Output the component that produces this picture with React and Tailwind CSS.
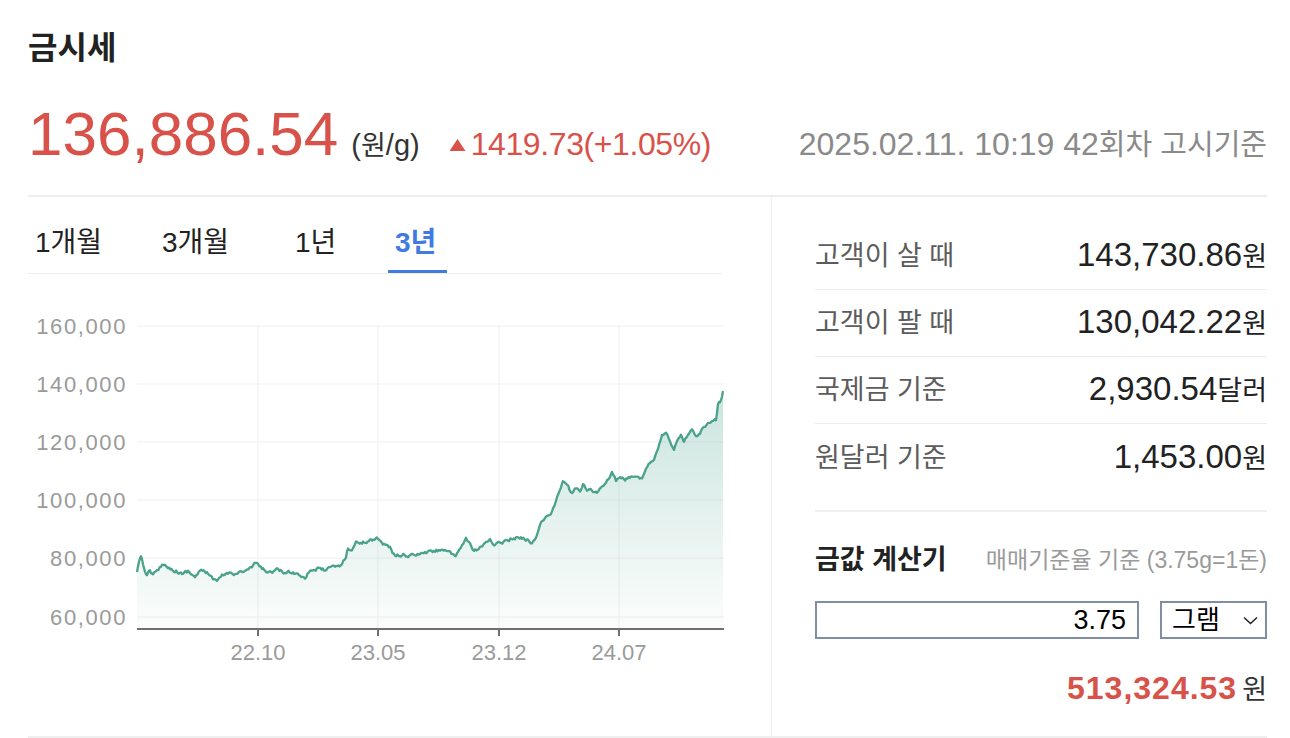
import React from "react";

const KP = [
  [137,572],[139,560],[141,558],[144,568],[147,575],[150,570],[153,575],[157,572],[161,566],[164,563],[168,568],[175,570],[182,574],[188,571],[195,577],[200,571],[207,572],[213,580],[217,582],[222,576],[228,573],[235,573],[240,572],[246,571],[252,567],[257,563],[262,569],[270,572],[277,570],[285,573],[292,572],[300,575],[305,577],[310,570],[318,569],[325,570],[335,567],[342,565],[346,556],[348,548],[352,550],[356,542],[362,543],[370,540],[378,538],[383,543],[390,548],[395,556],[400,555],[408,556],[415,555],[425,553],[435,551],[445,549],[450,553],[455,558],[458,553],[462,545],[466,538],[470,544],[474,552],[480,548],[486,544],[490,538],[494,546],[500,543],[508,539],[515,538],[522,538],[527,540],[532,543],[536,537],[540,523],[546,518],[552,511],[556,502],[560,490],[563,481],[567,485],[572,494],[576,488],[580,490],[583,484],[587,491],[592,490],[597,493],[601,488],[606,484],[612,473],[616,480],[620,478],[625,480],[630,477],[636,478],[642,477],[646,468],[650,462],[654,458],[658,447],[662,436],[666,432],[670,440],[674,450],[677,442],[681,437],[684,441],[688,436],[692,430],[696,438],[700,433],[704,428],[708,425],[712,423],[716,420],[718,405],[721,400],[723,391]
];

function buildPoints() {
  let seed = 12345;
  const rand = () => {
    seed = (seed * 16807) % 2147483647;
    return seed / 2147483647;
  };
  const pts = [];
  let n = 0;
  for (let i = 0; i < KP.length - 1; i++) {
    const [x0, y0] = KP[i];
    const [x1, y1] = KP[i + 1];
    const steps = Math.max(1, Math.round((x1 - x0) / 1.2));
    for (let s = 0; s < steps; s++) {
      const t = s / steps;
      n = n * 0.5 + (rand() - 0.5) * 3;
      const edge = i === 0 && s === 0 ? 0 : n;
      pts.push([x0 + (x1 - x0) * t, y0 + (y1 - y0) * t + edge]);
    }
  }
  pts.push(KP[KP.length - 1]);
  return pts;
}

const PTS = buildPoints();
const LINE = PTS.map((p, i) => `${i ? "L" : "M"}${p[0].toFixed(1)} ${p[1].toFixed(1)}`).join(" ");
const AREA = `${LINE} L723 629 L137 629 Z`;

const GRID_Y = [
  [326, "160,000"],
  [384, "140,000"],
  [442, "120,000"],
  [500, "100,000"],
  [558, "80,000"],
  [617, "60,000"],
];
const GRID_X = [
  [258, "22.10"],
  [378, "23.05"],
  [499, "23.12"],
  [619, "24.07"],
];

function Chart() {
  return (
    <svg width="696" height="463" viewBox="0 0 696 463" className="block">
      <defs>
        <linearGradient id="goldFill" x1="0" y1="390" x2="0" y2="629" gradientUnits="userSpaceOnUse">
          <stop offset="0" stopColor="#4fa68f" stopOpacity="0.3" />
          <stop offset="1" stopColor="#4fa68f" stopOpacity="0.02" />
        </linearGradient>
      </defs>
      <g transform="translate(-28,-274)">
        {GRID_Y.map(([y, label]) => (
          <g key={label}>
            <line x1="137" y1={y} x2="724" y2={y} stroke="#efefef" strokeWidth="1" />
            <text
              x="127"
              y={y + 8}
              textAnchor="end"
              fontFamily="Liberation Sans, Arial, sans-serif"
              fontSize="22"
              letterSpacing="1.6"
              fill="#9a9a9a"
            >
              {label}
            </text>
          </g>
        ))}
        {GRID_X.map(([x, label]) => (
          <g key={label}>
            <line x1={x} y1="326" x2={x} y2="629" stroke="#efefef" strokeWidth="1" />
            <line x1={x} y1="629" x2={x} y2="636" stroke="#707070" strokeWidth="2" />
            <text
              x={x}
              y="660"
              textAnchor="middle"
              fontFamily="Liberation Sans, Arial, sans-serif"
              fontSize="22"
              fill="#9a9a9a"
            >
              {label}
            </text>
          </g>
        ))}
        <path d={AREA} fill="url(#goldFill)" stroke="none" />
        <path d={LINE} fill="none" stroke="#4aa28b" strokeWidth="2.3" strokeLinejoin="round" />
        <line x1="137" y1="629" x2="724" y2="629" stroke="#707070" strokeWidth="2" />
      </g>
    </svg>
  );
}

function Row({ label, num, unit, last }) {
  return (
    <div
      className={`flex h-[67px] items-center justify-between ${last ? "" : "border-b border-[#ececec]"}`}
    >
      <span className="text-[27px] leading-[36px] text-[#5c5c5c]">{label}</span>
      <span className="flex items-baseline leading-[36px] text-[#222]">
        <span className="text-[33px]">{num}</span>
        <span className="text-[27px]">{unit}</span>
      </span>
    </div>
  );
}

export default function App() {
  return (
    <div className="w-[1290px] h-[738px] overflow-hidden bg-white pl-[28px] pr-[23px] font-['Liberation_Sans','Noto_Sans_CJK_KR',sans-serif]">
      <div className="pt-[28px] text-[32px] font-bold leading-[40px] text-[#222]">금시세</div>

      <div className="mt-[35px] flex h-[62px] items-baseline">
        <span className="text-[62px] leading-[62px] text-[#d8524a]">136,886.54</span>
        <span className="ml-[13px] text-[29px] text-[#333]">
          (<span className="text-[27px]">원</span>/g)
        </span>
        <span className="ml-[29px] flex items-baseline text-[#d8524a]">
          <svg width="17" height="14" viewBox="0 0 17 14" className="mr-[5px] self-center translate-y-[1px]">
            <polygon points="8.5,1 16.5,13 0.5,13" fill="#d8524a" />
          </svg>
          <span className="text-[32px] tracking-[-0.4px]">1419.73(+1.05%)</span>
        </span>
        <span className="ml-auto text-[32px] text-[#8a8a8a]">
          2025.02.11. 10:19 42<span className="text-[29px]">회차 고시기준</span>
        </span>
      </div>

      <div className="mt-[30px] h-[2px] bg-[#ededed]" />

      <div className="flex h-[541px] border-b-2 border-[#efefef]">
        <div className="w-[744px] shrink-0 border-r border-[#efefef] pr-[48px]">
          <div className="flex h-[77px] border-b border-[#eeeeee] text-[28px] leading-[32px]">
            <div className="w-[127px] pl-[7px] pt-[30px] text-[#222]">1개월</div>
            <div className="w-[133px] pl-[7px] pt-[30px] text-[#222]">3개월</div>
            <div className="w-[100px] pl-[7px] pt-[30px] text-[#222]">1년</div>
            <div className="flex h-[76px] flex-col justify-between">
              <div className="pl-[7px] pr-[11px] pt-[30px] font-bold text-[#3f7be0]">3년</div>
              <div className="h-[3px] bg-[#3f7be0]" />
            </div>
          </div>
          <Chart />
        </div>

        <div className="flex-1 pl-[43px]">
          <div className="pt-[26px]">
            <Row label="고객이 살 때" num="143,730.86" unit="원" />
            <Row label="고객이 팔 때" num="130,042.22" unit="원" />
            <Row label="국제금 기준" num="2,930.54" unit="달러" />
            <Row label="원달러 기준" num="1,453.00" unit="원" last />
          </div>
          <div className="mt-[19px] h-[2px] bg-[#efefef]" />

          <div className="mt-[30px] flex items-center justify-between leading-[36px]">
            <span className="text-[27px] font-bold text-[#222]">금값 계산기</span>
            <span className="text-[23px] text-[#9a9a9a]">매매기준율 기준 (3.75g=1돈)</span>
          </div>

          <div className="mt-[23px] flex justify-between">
            <div className="flex h-[38px] w-[324px] items-center justify-end border-2 border-[#7f8ea3] pr-[11px] text-[27px] text-black">
              3.75
            </div>
            <div className="flex h-[38px] w-[107px] items-center justify-between border-2 border-[#7f8ea3] pl-[10px] pr-[7px] text-[26px] text-black">
              <span>그램</span>
              <svg width="15" height="9" viewBox="0 0 15 9">
                <polyline points="1,1.5 7.5,7.5 14,1.5" fill="none" stroke="#222" strokeWidth="1.5" />
              </svg>
            </div>
          </div>

          <div className="mt-[31px] flex items-baseline justify-end leading-[36px]">
            <span className="text-[32px] font-bold tracking-[1px] text-[#d8524a]">513,324.53</span>
            <span className="ml-[5px] text-[27px] text-[#333]">원</span>
          </div>
        </div>
      </div>
    </div>
  );
}
